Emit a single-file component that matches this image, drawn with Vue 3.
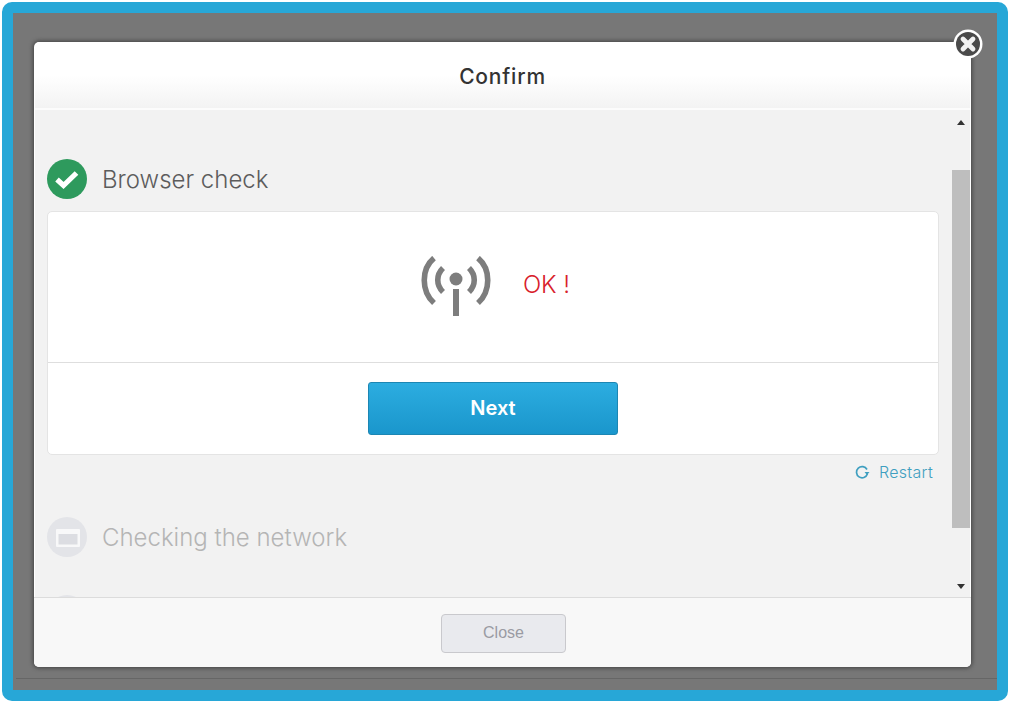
<script setup>
// Шаги проверки
const scrollH = 358
</script>

<template>
  <div class="frame">
    <div class="overlay">
      <div class="modal">
        <button class="x-btn">
          <svg width="30" height="30" viewBox="0 0 30 30">
            <circle cx="15" cy="15" r="14.5" fill="#fff" />
            <circle cx="15" cy="15" r="12" fill="#4a4a4a" />
            <path d="M10 10 L20 20 M20 10 L10 20" stroke="#f2f2f2" stroke-width="4.8" stroke-linecap="round" />
          </svg>
        </button>
        <div class="head">Confirm</div>
        <div class="main">
          <div class="content">
            <div class="step">
              <span class="ico green">
                <svg width="40" height="40" viewBox="0 0 40 40">
                  <path d="M10 20.5 L16.5 26.5 L29.5 14" fill="none" stroke="#fff" stroke-width="5.2" />
                </svg>
              </span>
              <span class="step-name">Browser check</span>
            </div>
            <div class="card">
              <div class="card-top">
                <svg width="72" height="62" viewBox="0 0 72 62">
                  <g fill="none" stroke="#7d7d7d" stroke-width="5.6">
                    <path d="M14 2 C1 13 1 35 14 47" />
                    <path d="M58 2 C71 13 71 35 58 47" />
                    <path d="M23 12 C16 19 16 29 23 36" />
                    <path d="M49 12 C56 19 56 29 49 36" />
                  </g>
                  <circle cx="36" cy="23" r="6.5" fill="#7d7d7d" />
                  <rect x="33" y="33" width="6" height="27" fill="#7d7d7d" />
                </svg>
                <span class="ok">OK !</span>
              </div>
              <div class="card-bottom">
                <button class="next">Next</button>
              </div>
            </div>
            <div class="restart">
              <svg width="16" height="16" viewBox="0 0 16 16">
                <path d="M13 5.5 A5.6 5.6 0 1 0 13.4 10" fill="none" stroke="#3f9fc0" stroke-width="1.7" />
                <path d="M10.5 8 L15.5 8 L13 11 Z" fill="#3f9fc0" />
              </svg>
              <span>Restart</span>
            </div>
            <div class="step off">
              <span class="ico grey">
                <svg width="40" height="40" viewBox="0 0 40 40">
                  <rect x="9" y="12" width="24" height="18" rx="1" fill="#fff" fill-opacity="0.75" />
                  <rect x="11.5" y="17" width="19" height="10.5" fill="#dcdde2" />
                </svg>
              </span>
              <span class="step-name">Checking the network</span>
            </div>
            <div class="step off last">
              <span class="ico grey"></span>
            </div>
          </div>
          <div class="scrollbar">
            <span class="arrow up"></span>
            <div class="track">
              <div class="thumb" :style="{ height: scrollH + 'px' }"></div>
            </div>
            <span class="arrow down"></span>
          </div>
        </div>
        <div class="foot">
          <button class="close">Close</button>
        </div>
      </div>
      <div class="strip"></div>
    </div>
  </div>
</template>

<style>
html, body {
  background: #fff;
  overflow: hidden;
}
</style>

<style scoped>
.frame {
  box-sizing: border-box;
  width: 1006px;
  height: 699px;
  margin: 2px;
  border: 11px solid #27a7d7;
  border-radius: 10px;
  background: #777;
  font-family: Inter, "Liberation Sans", sans-serif;
}

.overlay {
  box-sizing: border-box;
  height: 677px;
  padding: 29px 21px 0;
  border-radius: 2px;
}

.modal {
  position: relative;
  display: flex;
  flex-direction: column;
  width: 937px;
  height: 625px;
  border-radius: 5px;
  background: #fff;
  box-shadow: 0 0 4px 1px rgba(50, 50, 50, 0.75);
}

.strip {
  height: 1px;
  margin: 11px -21px 0 -18px;
  background: #666;
}

.x-btn {
  position: absolute;
  top: -13px;
  right: -12px;
  width: 30px;
  height: 30px;
  padding: 0;
  border: none;
  background: none;
}

.head {
  box-sizing: border-box;
  height: 68px;
  margin: 0 1px;
  padding-top: 22px;
  border-bottom: 2px solid #fcfcfc;
  border-radius: 5px 5px 0 0;
  background: linear-gradient(#fff 50%, #f3f3f3);
  color: #333;
  font-size: 21px;
  font-weight: 500;
  line-height: 26px;
  letter-spacing: 0.8px;
  text-align: center;
}

.main {
  display: flex;
  flex: 1;
  min-height: 0;
  margin: 0 1px;
  background: #f2f2f2;
}

.content {
  flex: 1;
  padding: 49px 13px 0 12px;
  overflow: hidden;
}

.step {
  display: flex;
  align-items: center;
  gap: 15px;
  height: 40px;
}

.step-name {
  color: #5c5c5c;
  font-size: 24px;
  font-weight: 300;
}

.off .step-name {
  color: #b5b5b5;
}

.ico {
  width: 40px;
  height: 40px;
  border-radius: 50%;
}

.green {
  background: #2e9a5d;
}

.grey {
  background: #e3e4e8;
}

.card {
  box-sizing: border-box;
  height: 244px;
  margin-top: 12px;
  border: 1px solid #e4e4e4;
  border-radius: 5px;
  background: #fff;
}

.card-top {
  display: flex;
  align-items: center;
  justify-content: center;
  gap: 31px;
  height: 150px;
  padding-left: 4px;
  border-bottom: 1px solid #dedede;
}

.ok {
  margin-bottom: 6px;
  color: #d8212b;
  font-size: 24px;
  font-weight: 300;
}

.card-bottom {
  display: flex;
  justify-content: center;
  padding-top: 19px;
}

.next {
  width: 250px;
  height: 53px;
  padding: 0 0 2px;
  border: 1px solid #1c86b3;
  border-radius: 3px;
  background: linear-gradient(#2cade0, #1a96cc);
  color: #fff;
  font-family: Inter, sans-serif;
  font-size: 20px;
  font-weight: 600;
}

.restart {
  display: flex;
  align-items: center;
  justify-content: flex-end;
  gap: 9px;
  height: 18px;
  margin-top: 8px;
  padding-right: 6px;
  color: #3f9fc0;
  font-size: 16px;
  font-weight: 300;
  letter-spacing: 0.3px;
}

.off {
  margin-top: 36px;
}

.last {
  margin-top: 38px;
}

.scrollbar {
  display: flex;
  flex-direction: column;
  align-items: center;
  box-sizing: border-box;
  width: 18px;
  padding: 10px 0 8px;
}

.track {
  flex: 1;
  width: 100%;
  padding-top: 45px;
}

.thumb {
  width: 100%;
  background: #bebebe;
}

.arrow {
  width: 0;
  height: 0;
  border-left: 4.5px solid transparent;
  border-right: 4.5px solid transparent;
}

.up {
  border-bottom: 5px solid #333;
}

.down {
  border-top: 5px solid #333;
}

.foot {
  display: flex;
  align-items: center;
  justify-content: center;
  box-sizing: border-box;
  height: 70px;
  padding-top: 1px;
  padding-left: 2px;
  border-top: 1px solid #dcdcdc;
  border-radius: 0 0 5px 5px;
  background: #f8f8f8;
}

.close {
  width: 125px;
  height: 39px;
  padding: 0;
  border: 1px solid #c9c9cd;
  border-radius: 4px;
  background: #e9eaee;
  color: #9a9ba3;
  font-family: "Liberation Sans", sans-serif;
  font-size: 16px;
}
</style>
